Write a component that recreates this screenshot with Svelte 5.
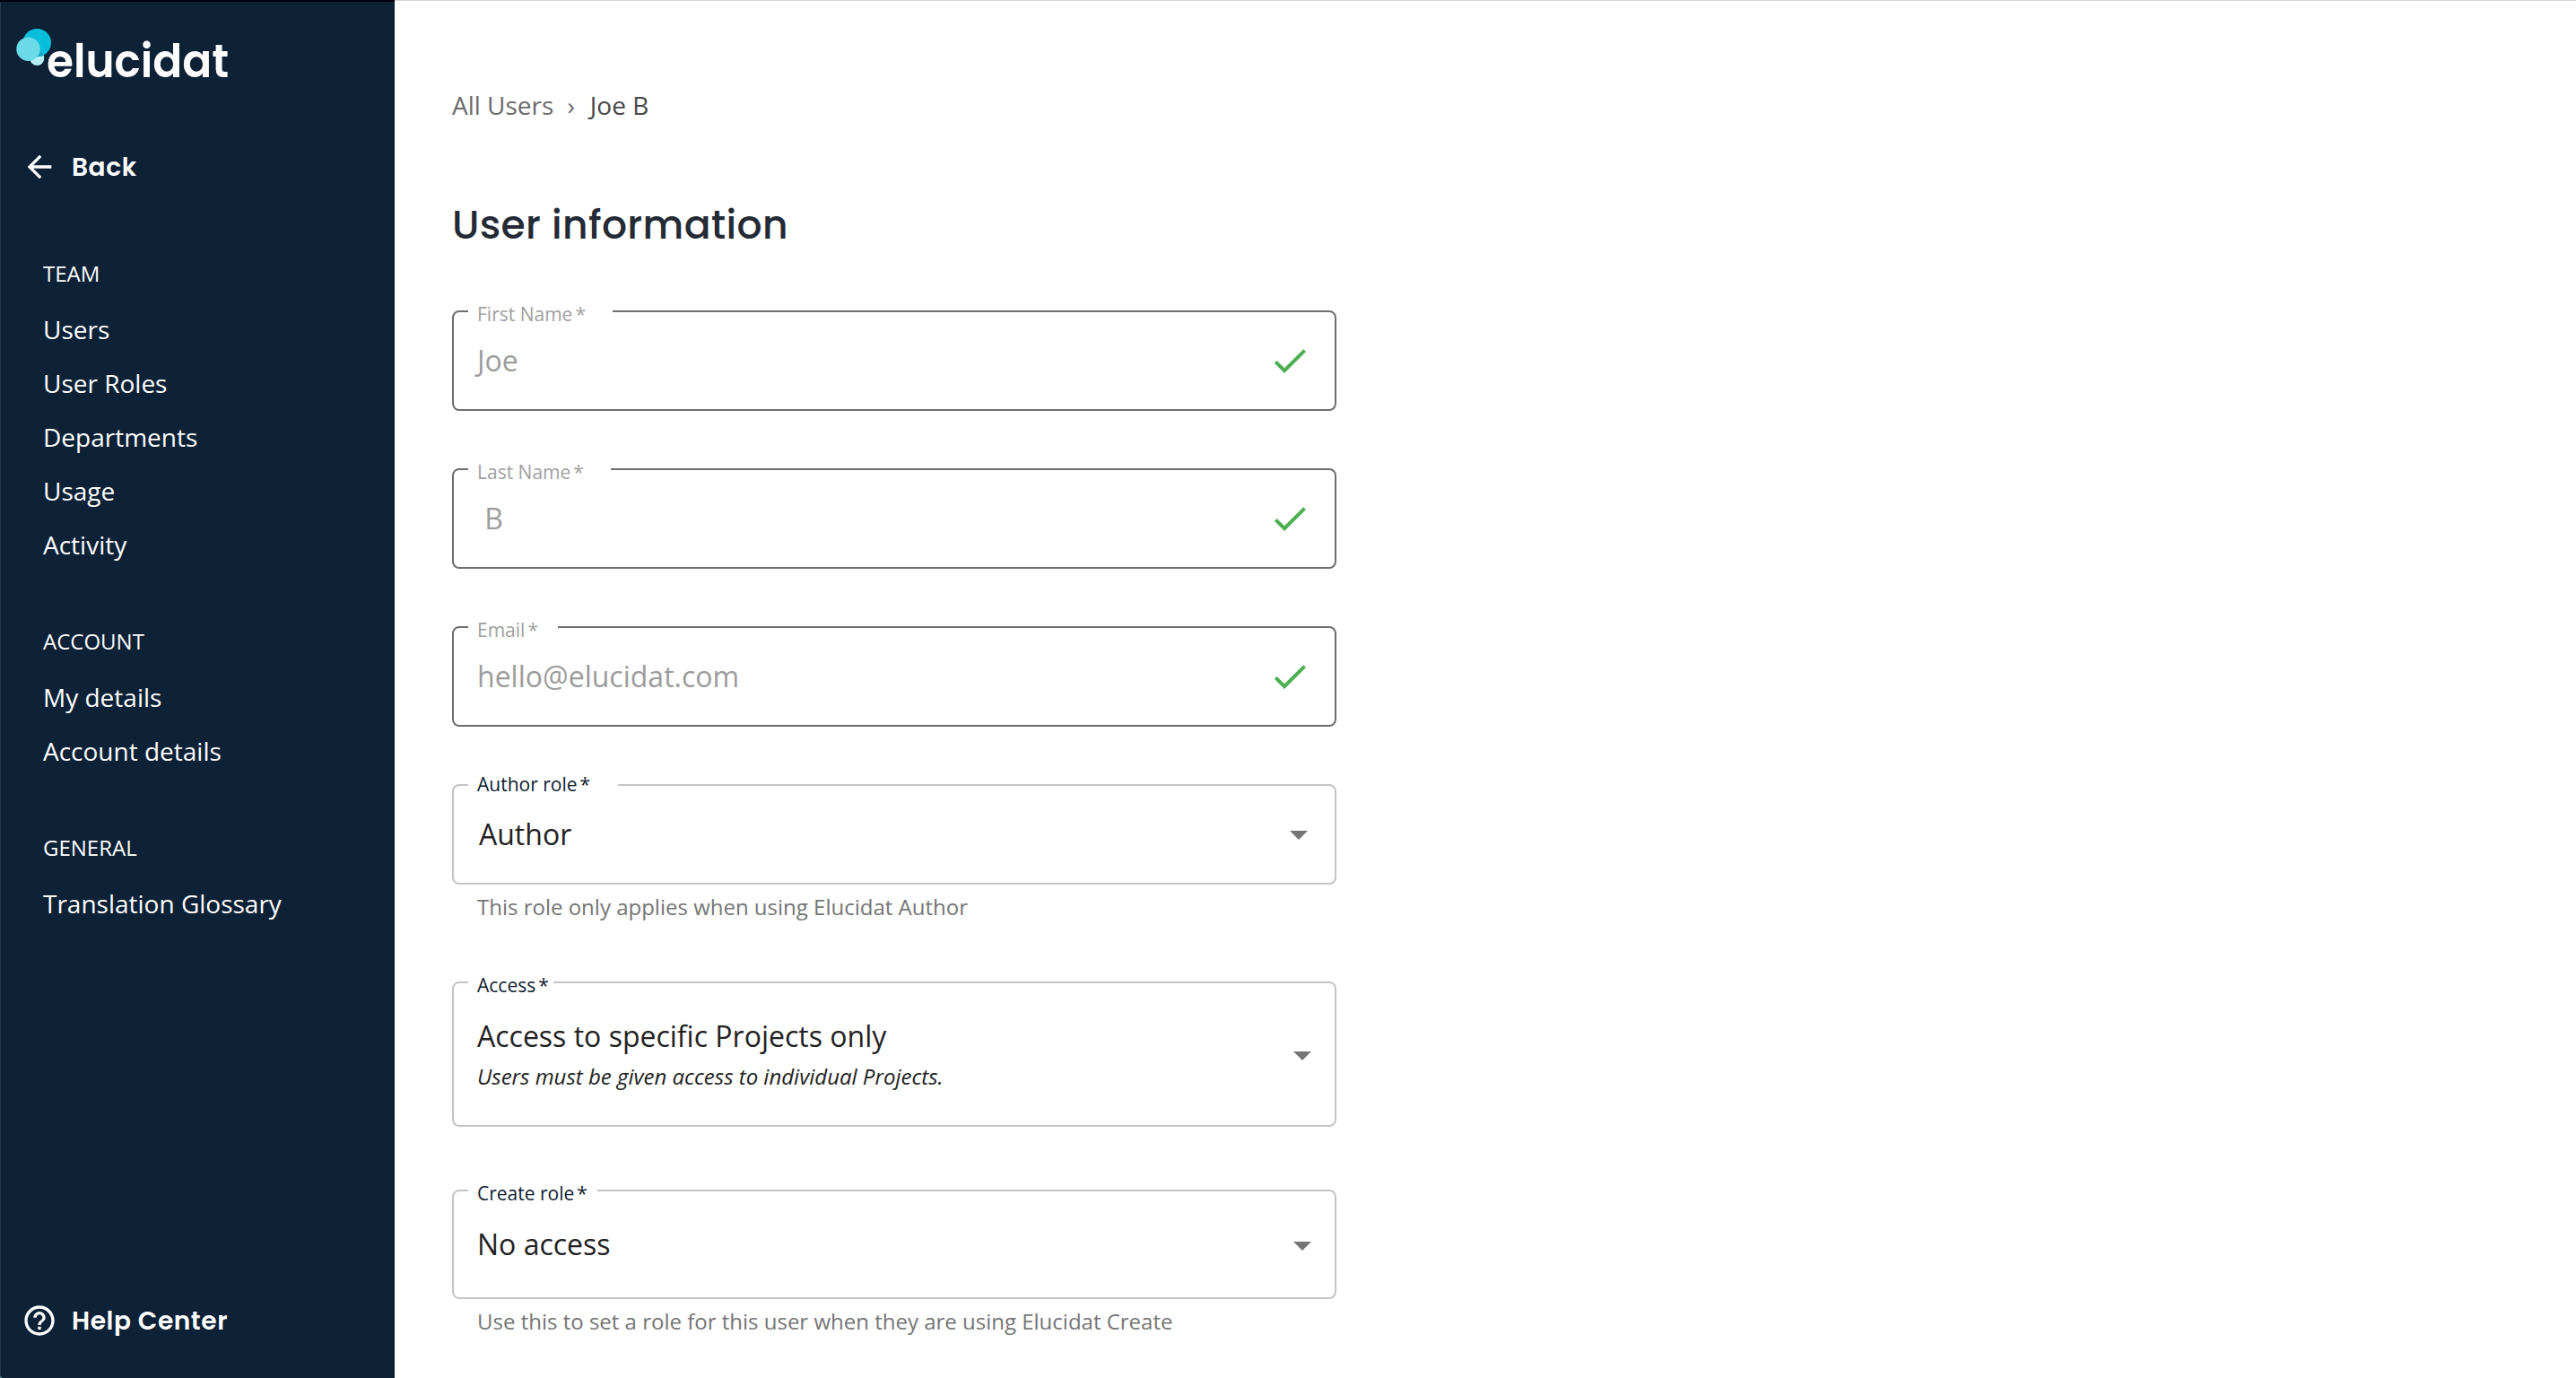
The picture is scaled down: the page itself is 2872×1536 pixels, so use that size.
<script lang="ts">
  const sections = [
    { title: 'TEAM', links: ['Users', 'User Roles', 'Departments', 'Usage', 'Activity'] },
    { title: 'ACCOUNT', links: ['My details', 'Account details'] },
    { title: 'GENERAL', links: ['Translation Glossary'] }
  ]

  const inputs = [
    { label: 'First Name', value: 'Joe', notch: 161 },
    { label: 'Last Name', value: ' B', notch: 159 },
    { label: 'Email', value: 'hello@elucidat.com', notch: 100 }
  ]
</script>

{#snippet fieldLabel(text: string, notch: number)}
  <div class="field__label" style="width: {notch}px">{text}<span class="field__required">*</span></div>
{/snippet}

{#snippet arrow()}
  <svg class="field__arrow" width="20" height="10" viewBox="0 0 20 10"><path d="M0 0h20L10 10z" /></svg>
{/snippet}

<div class="page">
  <nav class="sidebar">
    <svg class="logo" width="280" height="120" viewBox="0 0 280 120">
      <clipPath id="logo-overlap"><circle cx="41.3" cy="65" r="8" /></clipPath>
      <circle cx="41.3" cy="65" r="8" fill="#b5eef6" />
      <circle cx="41.3" cy="47.6" r="15.7" fill="#06bdda" />
      <circle cx="41.3" cy="47.6" r="15.7" fill="#1aa5c3" clip-path="url(#logo-overlap)" />
      <circle cx="31.5" cy="54.7" r="13.2" fill="#6bdae8" />
      <text class="logo__text" x="52" y="86" textLength="203" lengthAdjust="spacingAndGlyphs">elucidat</text>
    </svg>

    <a class="action back" href="#back">
      <svg width="40" height="40" viewBox="0 0 24 24">
        <path d="M20 11H7.83l5.59-5.59L12 4l-8 8 8 8 1.41-1.41L7.83 13H20v-2z" />
      </svg>
      <span>Back</span>
    </a>

    {#each sections as section}
      <div class="section">
        <div class="section__title">{section.title}</div>
        {#each section.links as link}
          <a class="section__link" href="#link">{link}</a>
        {/each}
      </div>
    {/each}

    <a class="action help" href="#help">
      <svg width="40" height="40" viewBox="0 0 24 24">
        <path d="M11 18h2v-2h-2v2zm1-16C6.48 2 2 6.48 2 12s4.48 10 10 10 10-4.48 10-10S17.52 2 12 2zm0 18c-4.41 0-8-3.59-8-8s3.59-8 8-8 8 3.59 8 8-3.59 8-8 8zm0-14c-2.21 0-4 1.79-4 4h2c0-1.1.9-2 2-2s2 .9 2 2c0 2-3 1.75-3 5h2c0-2.25 3-2.5 3-5 0-2.21-1.79-4-4-4z" />
      </svg>
      <span>Help Center</span>
    </a>
  </nav>

  <main class="content">
    <div class="breadcrumb">
      <a href="#users">All Users</a>
      <span class="breadcrumb__separator">›</span>
      <span class="breadcrumb__current">Joe B</span>
    </div>

    <h1>User information</h1>

    {#each inputs as input}
      <div class="field disabled">
        {@render fieldLabel(input.label, input.notch)}
        <div class="field__value">{input.value}</div>
        <svg class="field__check" width="48" height="48" viewBox="0 0 24 24">
          <path d="M9 16.17L4.83 12l-1.42 1.41L9 19 21 7l-1.41-1.41z" />
        </svg>
      </div>
    {/each}

    <div class="field author">
      {@render fieldLabel('Author role', 167)}
      <div class="field__value">Author</div>
      {@render arrow()}
    </div>
    <div class="hint">This role only applies when using Elucidat Author</div>

    <div class="field access">
      {@render fieldLabel('Access', 95)}
      <div class="access__text">
        <div class="field__value">Access to specific Projects only</div>
        <div class="field__note">Users must be given access to individual Projects.</div>
      </div>
      {@render arrow()}
    </div>

    <div class="field create">
      {@render fieldLabel('Create role', 144)}
      <div class="field__value">No access</div>
      {@render arrow()}
    </div>
    <div class="hint">Use this to set a role for this user when they are using Elucidat Create</div>
  </main>
</div>

<style>
  :global(body) {
    background: #fff;
  }

  .page {
    display: flex;
    height: 1536px;
    overflow: hidden;
    font-family: "Open Sans", "Noto Sans", sans-serif;
    background: linear-gradient(#d5d5d5, #d5d5d5) 0 0 / 100% 1px no-repeat #fff;
  }

  a {
    color: inherit;
    text-decoration: none;
  }

  .sidebar {
    box-sizing: border-box;
    width: 440px;
    flex: none;
    display: flex;
    flex-direction: column;
    color: #fff;
    background:
      radial-gradient(circle at 100% 0, transparent 9px, #4b7484 10px) 0 100% / 8px 8px no-repeat,
      linear-gradient(#01020f, #01020f) 0 0 / 100% 2px no-repeat,
      linear-gradient(#24374b, #24374b) 0 0 / 1px 100% no-repeat,
      #0d2137;
  }

  .logo {
    display: block;
    flex: none;
  }

  .logo__text {
    font-family: Poppins, Inter, sans-serif;
    font-size: 52px;
    font-weight: 600;
    fill: #fff;
  }

  .action {
    display: flex;
    align-items: center;
    gap: 16px;
    height: 40px;
    padding-left: 24px;
    font-family: Poppins, Inter, sans-serif;
    font-size: 28px;
    font-weight: 600;
    letter-spacing: 0.6px;
  }

  .action svg {
    flex: none;
    fill: #fff;
  }

  .action span {
    padding-top: 2px;
  }

  .back {
    margin-top: 46px;
    margin-bottom: 81px;
  }

  .help {
    margin-top: auto;
    margin-bottom: 44px;
  }

  .section {
    display: flex;
    flex-direction: column;
    padding-left: 48px;
    margin-bottom: 60px;
  }

  .section__title {
    font-size: 24px;
    line-height: 36px;
    margin-bottom: 14px;
  }

  .section__link {
    font-size: 28px;
    line-height: 60px;
  }

  .content {
    width: 986px;
    padding: 98px 0 0 64px;
  }

  .breadcrumb {
    display: flex;
    font-size: 28px;
    line-height: 38px;
    color: #6b6b6b;
  }

  .breadcrumb__separator {
    margin: 0 17px 0 15px;
  }

  .breadcrumb__current {
    color: #484848;
  }

  h1 {
    margin: 85px 0 65px;
    font-family: Poppins, Inter, sans-serif;
    font-size: 44px;
    line-height: 60px;
    font-weight: 500;
    letter-spacing: 0.35px;
    color: #242b35;
  }

  .field {
    position: relative;
    box-sizing: border-box;
    height: 112px;
    padding: 0 26px;
    border: 2px solid #c4c4c4;
    border-radius: 8px;
    display: flex;
    align-items: center;
    justify-content: space-between;
    color: #222;
  }

  .field.disabled {
    margin-bottom: 64px;
    border-color: #6e6e70;
    color: #9c9c9c;
  }

  /* sits over the top border and cuts the notch out of it */
  .field__label {
    position: absolute;
    left: 16px;
    top: -12px;
    box-sizing: border-box;
    padding-left: 10px;
    background: #fff;
    font-size: 21px;
    line-height: 28px;
    white-space: nowrap;
    color: #0d2130;
  }

  .field.disabled .field__label {
    color: #a0a0a0;
  }

  .author .field__label {
    top: -16px;
  }

  .field__required {
    margin-left: 3px;
  }

  .field__value {
    font-size: 32px;
    line-height: 46px;
    white-space: pre;
  }

  .field__note {
    margin-top: 2px;
    font-size: 24px;
    line-height: 40px;
    font-style: italic;
  }

  .field__check {
    fill: #4caf50;
  }

  .field__arrow {
    margin-top: 2px;
    fill: #757575;
  }

  .author {
    padding: 0 30px 0 28px;
  }

  .access {
    height: 162px;
    margin: 65px 0 70px;
  }

  .access__text {
    padding-top: 2px;
  }

  .access .field__arrow {
    margin-top: 4px;
  }

  .create {
    height: 122px;
  }

  .create .field__arrow {
    margin-top: 4px;
  }

  .hint {
    margin-top: 7px;
    padding-left: 28px;
    font-size: 24px;
    line-height: 36px;
    color: #757575;
  }
</style>
